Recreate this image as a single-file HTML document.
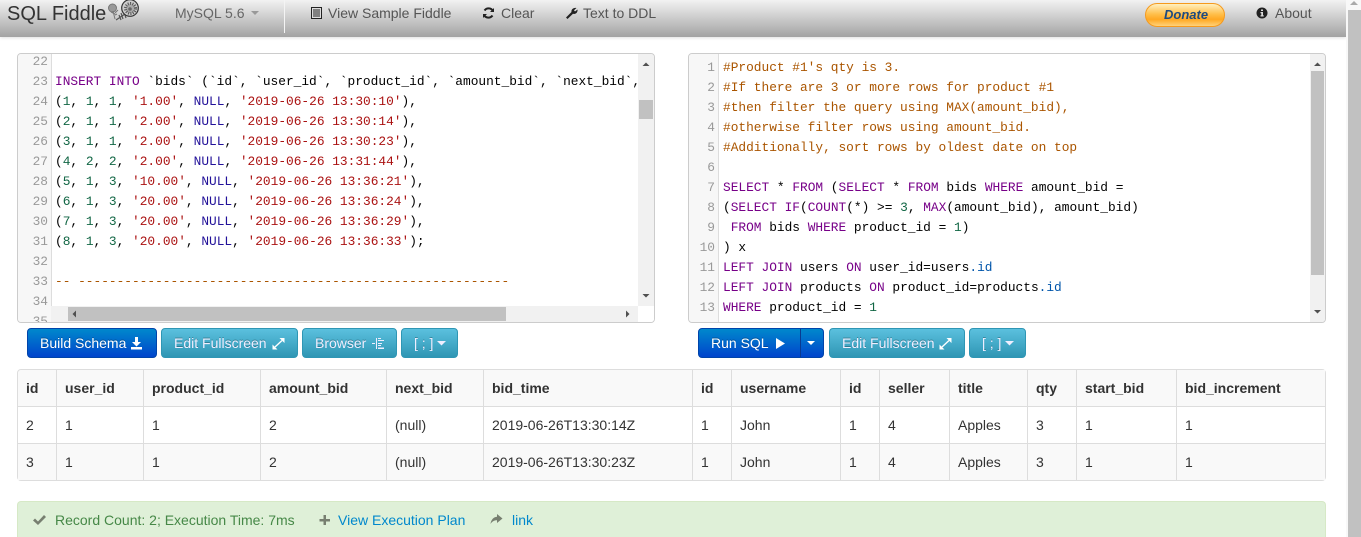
<!DOCTYPE html>
<html><head><meta charset="utf-8"><style>
html,body{margin:0;padding:0;width:1361px;height:537px;overflow:hidden;background:#fff;font-family:"Liberation Sans",sans-serif;font-size:14px;color:#333}
.a{position:absolute;white-space:pre}
#nav{position:absolute;left:0;top:0;width:1346px;height:37px;background:linear-gradient(#f2f2f2,#a3a3a3);box-shadow:0 1px 3px rgba(0,0,0,.12)}
.nt{position:absolute;top:5px;line-height:16px;color:#555;font-size:14px;white-space:pre}
.panel{position:absolute;top:53px;width:636px;height:268px;border:1px solid #ccc;border-radius:4px;background:#fff;overflow:hidden}
.gut{position:absolute;left:0;top:0;bottom:0;background:#f7f7f7;border-right:1px solid #ddd}
.ln{position:absolute;text-align:right;color:#999;font:12.84px/20px "Liberation Mono",monospace;white-space:pre}
.cl{position:absolute;font:12.84px/20px "Liberation Mono",monospace;white-space:pre;color:#000}
.k{color:#708}.n{color:#164}.s{color:#a11}.c{color:#a50}.b{color:#05a}.u{color:#219}
.btn{position:absolute;top:328px;height:30px;border-radius:4px;color:#fff;font-size:14px;line-height:29px;box-sizing:border-box;white-space:pre;text-shadow:0 -1px 0 rgba(0,0,0,.25)}
.blue{background:linear-gradient(#0088cc,#0044cc);border:1px solid #0044aa}
.teal{background:linear-gradient(#5bc0de,#2f96b4);border:1px solid #2f96b4;color:#eef}
.bt{position:absolute;top:0;line-height:29px}
table{position:absolute;left:17px;top:369px;width:1309px;height:112px;border-collapse:separate;border-spacing:0;table-layout:fixed;border:1px solid #ddd;border-radius:4px;font-size:14px}
td,th{padding:0 0 0 8px;height:37px;box-sizing:border-box;text-align:left;border-left:1px solid #ddd;border-top:1px solid #ddd;line-height:20px;white-space:nowrap;background:#f9f9f9;overflow:hidden}
tr:first-child th{border-top:0;height:36px}
tr.w td{background:#fff}
td:first-child,th:first-child{border-left:0}
th:first-child{border-top-left-radius:4px}
#ok{position:absolute;left:17px;top:501px;width:1309px;height:36px;background:#dff0d8;border:1px solid #d6e9c6;border-bottom:0;border-radius:4px 4px 0 0;box-sizing:border-box}
svg{position:absolute;display:block}
</style></head><body>
<div id="nav">
<div class="a" style="left:7px;top:2px;font-size:20px;line-height:24px;color:#333">SQL Fiddle</div>
<svg style="left:107px;top:0" width="36" height="22" viewBox="0 0 36 22" fill="none" stroke="#444">
<path d="M21 12L9 20M19 10l2 6M17 12l2 6M14 13l2 6M12 15l2 5" stroke="#555" stroke-width="1.200"/>
<circle cx="23" cy="8" r="8.300" fill="#ccc" stroke="#333" stroke-width="1.200"/>
<circle cx="23.500" cy="8.500" r="5" fill="#aaa" stroke="#555" stroke-dasharray="1 1.300" stroke-width="3"/>
<circle cx="23" cy="9" r="1.800" fill="#666" stroke="none"/>
<circle cx="5.500" cy="8" r="4" fill="#999" stroke="#777"/>
<path d="M6 11l2 8M4 12l4 2M11 10l-3 3M10 14l-2 1" stroke="#777"/>
</svg>
<div class="nt" style="left:175px;color:#666">MySQL 5.6</div>
<svg style="left:251px;top:11px" width="9" height="5"><path d="M0 0h8L4 4z" fill="#999"/></svg>
<div style="position:absolute;left:284px;top:0;width:1px;height:33px;background:#f4f4f4"></div>
<svg style="left:311px;top:7px" width="11" height="12"><rect x=".5" y=".5" width="10" height="11" fill="#ddd" stroke="#222"/><path d="M2 3h7M2 5h7M2 7h7M2 9h7" stroke="#222"/></svg>
<div class="nt" style="left:328px">View Sample Fiddle</div>
<svg style="left:482px;top:7px" width="13" height="12" fill="none" stroke="#222" stroke-width="2"><path d="M11 4A5 5 0 0 0 2.500 3.500M2 8a5 5 0 0 0 8.500 .5"/><path d="M12 1v4H8zM1 11V7h4z" fill="#222" stroke="none"/></svg>
<div class="nt" style="left:501px">Clear</div>
<svg style="left:565px;top:7px" width="13" height="12"><path d="M1 10.500L6.500 5C6 2.500 8.500 .2 11.500 1L9 3.200 10 4.500l2.500-2C13 5.500 10.500 7.500 8 6.800L2.500 12z" fill="#222"/></svg>
<div class="nt" style="left:583px">Text to DDL</div>
<div style="position:absolute;left:1145px;top:3px;width:80px;height:24px;box-sizing:border-box;border:1px solid #f59a1e;border-radius:12px;background:linear-gradient(#fff0c0,#ffc04d 45%,#ffa822 70%,#ffd27a)"></div>
<div class="a" style="left:1164px;top:6px;font:italic bold 13px/17px 'Liberation Sans',sans-serif;color:#1d4a80">Donate</div>
<svg style="left:1256px;top:7px" width="12" height="12"><circle cx="6" cy="6" r="5.500" fill="#222"/><path d="M5 2.500h2v1.500H5zM4.500 5H7v3.200h.7V9.500H4.500V8.200h.8V6.200h-.8z" fill="#ddd"/></svg>
<div class="nt" style="left:1275px">About</div>
</div>

<div style="position:absolute;left:1346px;top:0;width:15px;height:537px;background:#f8f8f8"></div>
<div style="position:absolute;left:1348px;top:10px;width:13px;height:527px;background:#c1c1c1"></div>
<svg style="left:1349px;top:0" width="10" height="6"><path d="M1 5h8L5 1z" fill="#aaa"/></svg>

<div class="panel" style="left:17px">
<div class="gut" style="width:33px"></div>
<div class="ln" style="left:0;width:30px;top:-2px">22
23
24
25
26
27
28
29
30
31
32
33
34
35</div>
<div class="cl" style="left:37px;top:-2px">
<span class="k">INSERT INTO</span> `bids` (`id`, `user_id`, `product_id`, `amount_bid`, `next_bid`,
(<span class="n">1</span>, <span class="n">1</span>, <span class="n">1</span>, <span class="s">'1.00'</span>, <span class="u">NULL</span>, <span class="s">'2019-06-26 13:30:10'</span>),
(<span class="n">2</span>, <span class="n">1</span>, <span class="n">1</span>, <span class="s">'2.00'</span>, <span class="u">NULL</span>, <span class="s">'2019-06-26 13:30:14'</span>),
(<span class="n">3</span>, <span class="n">1</span>, <span class="n">1</span>, <span class="s">'2.00'</span>, <span class="u">NULL</span>, <span class="s">'2019-06-26 13:30:23'</span>),
(<span class="n">4</span>, <span class="n">2</span>, <span class="n">2</span>, <span class="s">'2.00'</span>, <span class="u">NULL</span>, <span class="s">'2019-06-26 13:31:44'</span>),
(<span class="n">5</span>, <span class="n">1</span>, <span class="n">3</span>, <span class="s">'10.00'</span>, <span class="u">NULL</span>, <span class="s">'2019-06-26 13:36:21'</span>),
(<span class="n">6</span>, <span class="n">1</span>, <span class="n">3</span>, <span class="s">'20.00'</span>, <span class="u">NULL</span>, <span class="s">'2019-06-26 13:36:24'</span>),
(<span class="n">7</span>, <span class="n">1</span>, <span class="n">3</span>, <span class="s">'20.00'</span>, <span class="u">NULL</span>, <span class="s">'2019-06-26 13:36:29'</span>),
(<span class="n">8</span>, <span class="n">1</span>, <span class="n">3</span>, <span class="s">'20.00'</span>, <span class="u">NULL</span>, <span class="s">'2019-06-26 13:36:33'</span>);

<span class="c">-- --------------------------------------------------------</span></div>
<div style="position:absolute;left:620px;top:0;width:16px;height:252px;background:#f1f1f1"></div>
<div style="position:absolute;left:621px;top:46px;width:14px;height:19px;background:#c1c1c1"></div>
<svg style="left:620px;top:0" width="16" height="252"><path d="M4.500 12h7L8 8.500zM4.500 240h7L8 243.500z" fill="#505050"/></svg>
<div style="position:absolute;left:33px;top:252px;width:587px;height:16px;background:#f1f1f1"></div>
<div style="position:absolute;left:50px;top:253px;width:438px;height:14px;background:#c1c1c1"></div>
<svg style="left:33px;top:252px" width="587" height="16"><path d="M25 4.500v7L21.500 8zM575 4.500v7L578.500 8z" fill="#505050"/></svg>
<div style="position:absolute;left:620px;top:252px;width:16px;height:16px;background:#fff"></div>
</div>

<div class="panel" style="left:688px">
<div class="gut" style="width:29px"></div>
<div class="ln" style="left:0;width:26px;top:4px">1
2
3
4
5
6
7
8
9
10
11
12
13</div>
<div class="cl" style="left:34px;top:4px"><span class="c">#Product #1's qty is 3.
#If there are 3 or more rows for product #1
#then filter the query using MAX(amount_bid),
#otherwise filter rows using amount_bid.
#Additionally, sort rows by oldest date on top</span>

<span class="k">SELECT</span> * <span class="k">FROM</span> (<span class="k">SELECT</span> * <span class="k">FROM</span> bids <span class="k">WHERE</span> amount_bid =
(<span class="k">SELECT</span> <span class="k">IF</span>(<span class="k">COUNT</span>(*) &gt;= <span class="n">3</span>, <span class="k">MAX</span>(amount_bid), amount_bid)
 <span class="k">FROM</span> bids <span class="k">WHERE</span> product_id = <span class="n">1</span>)
) x
<span class="k">LEFT JOIN</span> users <span class="k">ON</span> user_id=users<span class="b">.id</span>
<span class="k">LEFT JOIN</span> products <span class="k">ON</span> product_id=products<span class="b">.id</span>
<span class="k">WHERE</span> product_id = <span class="n">1</span></div>
<div style="position:absolute;left:621px;top:0;width:15px;height:268px;background:#f1f1f1"></div>
<div style="position:absolute;left:622px;top:17px;width:13px;height:204px;background:#c1c1c1"></div>
<svg style="left:621px;top:0" width="15" height="268"><path d="M4 12h7L7.500 8.500zM4 256h7L7.500 259.500z" fill="#505050"/></svg>
</div>

<div class="btn blue" style="left:27px;width:130px"><span class="bt" style="left:12px">Build Schema</span>
<svg style="left:103px;top:8px" width="12" height="13"><path d="M4 0h3v5h3L5.500 9.500 1 5h3zM0 10h11v2.500H0z" fill="#fff"/></svg></div>
<div class="btn teal" style="left:161px;width:137px"><span class="bt" style="left:12px">Edit Fullscreen</span>
<svg style="left:110px;top:9px" width="13" height="12" fill="#fff" stroke="none"><path d="M7.500 0H12.500V5zM.5 11.500V6.500L5.500 11.500z"/><path d="M10 2.500L3 9" stroke="#fff" stroke-width="1.400"/></svg></div>
<div class="btn teal" style="left:302px;width:95px"><span class="bt" style="left:12px">Browser</span>
<svg style="left:69px;top:9px" width="13" height="12" fill="#eef"><path d="M4 0h1v11H4zM0 5h3v1H0zM6 0h3v1H6zM6 2h6v1H6zM6 5h4v1H6zM6 7h3v1H6zM6 9.500h6v1.500H6z"/></svg></div>
<div class="btn teal" style="left:401px;width:57px"><span class="bt" style="left:12px">[ ; ]</span>
<svg style="left:35px;top:12px" width="10" height="5"><path d="M0 0h9L4.500 4.500z" fill="#eef"/></svg></div>

<div class="btn blue" style="left:698px;width:126px"><span class="bt" style="left:12px">Run SQL</span>
<svg style="left:77px;top:9px" width="10" height="12"><path d="M0 0l9 5.500L0 11z" fill="#fff"/></svg>
<div style="position:absolute;left:101px;top:0;width:1px;height:28px;background:#0a3a90"></div>
<svg style="left:108px;top:12px" width="10" height="5"><path d="M0 0h8L4 4z" fill="#fff"/></svg></div>
<div class="btn teal" style="left:829px;width:136px"><span class="bt" style="left:12px">Edit Fullscreen</span>
<svg style="left:109px;top:9px" width="13" height="12" fill="#fff" stroke="none"><path d="M7.500 0H12.500V5zM.5 11.500V6.500L5.500 11.500z"/><path d="M10 2.500L3 9" stroke="#fff" stroke-width="1.400"/></svg></div>
<div class="btn teal" style="left:969px;width:57px"><span class="bt" style="left:12px">[ ; ]</span>
<svg style="left:35px;top:12px" width="10" height="5"><path d="M0 0h9L4.500 4.500z" fill="#eef"/></svg></div>

<table>
<colgroup><col style="width:38px"><col style="width:87px"><col style="width:117px"><col style="width:126px"><col style="width:97px"><col style="width:209px"><col style="width:39px"><col style="width:109px"><col style="width:39px"><col style="width:70px"><col style="width:78px"><col style="width:49px"><col style="width:100px"><col></colgroup>
<tr><th>id</th><th>user_id</th><th>product_id</th><th>amount_bid</th><th>next_bid</th><th>bid_time</th><th>id</th><th>username</th><th>id</th><th>seller</th><th>title</th><th>qty</th><th>start_bid</th><th>bid_increment</th></tr>
<tr class="w"><td>2</td><td>1</td><td>1</td><td>2</td><td>(null)</td><td>2019-06-26T13:30:14Z</td><td>1</td><td>John</td><td>1</td><td>4</td><td>Apples</td><td>3</td><td>1</td><td>1</td></tr>
<tr><td>3</td><td>1</td><td>1</td><td>2</td><td>(null)</td><td>2019-06-26T13:30:23Z</td><td>1</td><td>John</td><td>1</td><td>4</td><td>Apples</td><td>3</td><td>1</td><td>1</td></tr>
</table>

<div id="ok"></div>
<svg style="left:33px;top:514px" width="14" height="12"><path d="M0 6.500l2-2 3 3L11 1l2 2-8 8z" fill="#777f70"/></svg>
<div class="a" style="left:55px;top:512px;line-height:16px;color:#468847">Record Count: 2; Execution Time: 7ms</div>
<svg style="left:319px;top:514px" width="12" height="12"><path d="M4.500 1h2.500v4H11v2.500H7V11H4.500V7.500H.5V5h4z" fill="#777f70"/></svg>
<div class="a" style="left:338px;top:512px;line-height:16px;color:#0088cc">View Execution Plan</div>
<svg style="left:490px;top:514px" width="13" height="11"><path d="M7 0l5.500 4.500L7 9V6.200C4 6.200 2 7.500.5 10 1 6 3.500 3 7 2.800z" fill="#777f70"/></svg>
<div class="a" style="left:512px;top:512px;line-height:16px;color:#0088cc">link</div>
</body></html>
